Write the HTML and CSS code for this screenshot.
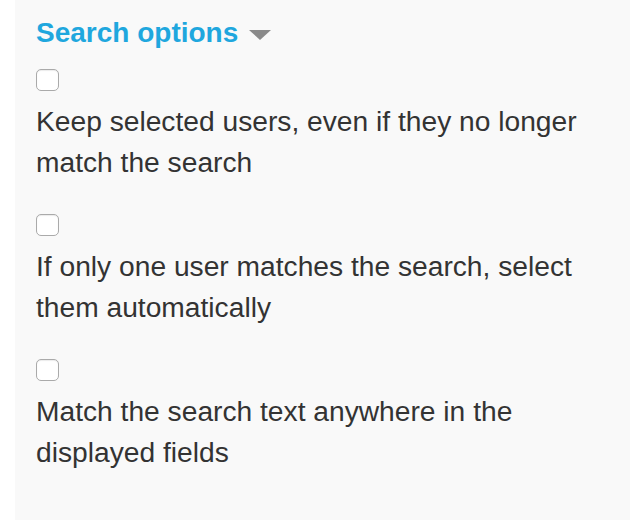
FILE: index.html
```html
<!DOCTYPE html>
<html>
<head>
<meta charset="utf-8">
<link rel="stylesheet" href="styles.css">
</head>
<body>
<div class="panel">
  <h3 class="heading">Search options <span class="caret"></span></h3>
  <div class="option">
    <span class="checkbox"></span>
    <p class="label">Keep selected users, even if they no longer match the search</p>
  </div>
  <div class="option">
    <span class="checkbox"></span>
    <p class="label">If only one user matches the search, select them automatically</p>
  </div>
  <div class="option">
    <span class="checkbox"></span>
    <p class="label">Match the search text anywhere in the displayed fields</p>
  </div>
</div>
</body>
</html>
```
FILE: styles.css
```css
html, body {
  margin: 0;
  padding: 0;
  background: #ffffff;
  height: 100%;
}
body {
  font-family: "Liberation Sans", Arial, sans-serif;
  color: #333333;
}
.panel {
  margin-left: 15px;
  background: #f9f9f9;
  min-height: 520px;
  padding: 14px 0 0 21px;
  box-sizing: border-box;
}
.heading {
  margin: 0;
  font-size: 28px;
  line-height: 38px;
  font-weight: bold;
  color: #1fa7de;
  display: flex;
  align-items: center;
}
.caret {
  display: inline-block;
  width: 0;
  height: 0;
  margin-left: 11px;
  margin-top: 3px;
  border-left: 11.5px solid transparent;
  border-right: 11.5px solid transparent;
  border-top: 10px solid #8a8a8a;
}
.option {
  display: flex;
  flex-direction: column;
  align-items: flex-start;
  margin-top: 17px;
}
.option + .option {
  margin-top: 31px;
}
.checkbox {
  display: block;
  width: 21px;
  height: 20px;
  border: 1px solid #aaaaaa;
  border-radius: 5px;
  background: #ffffff;
  box-shadow: inset 0 1px 1px rgba(0,0,0,0.08);
}
.label {
  margin: 10px 0 0;
  font-size: 28.2px;
  line-height: 41px;
  max-width: 560px;
}
```
